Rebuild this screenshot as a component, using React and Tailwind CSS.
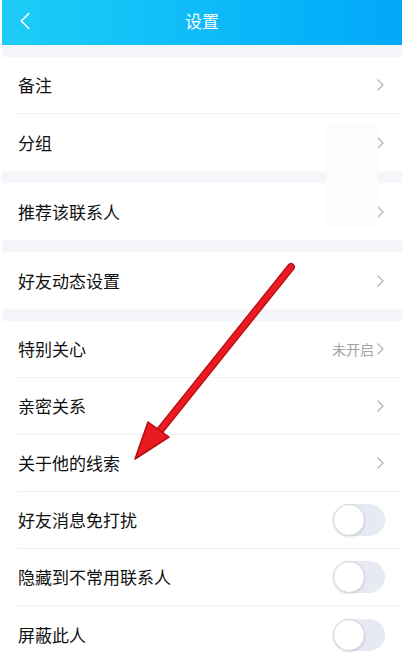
import { ChevronLeft } from "lucide-react";

const FONT = { fontFamily: '"Noto Sans CJK SC", "Noto Sans", sans-serif' };

const groups = [
  [
    { label: "备注", kind: "link" },
    { label: "分组", kind: "link" },
  ],
  [{ label: "推荐该联系人", kind: "link" }],
  [{ label: "好友动态设置", kind: "link" }],
  [
    { label: "特别关心", kind: "link", value: "未开启" },
    { label: "亲密关系", kind: "link" },
    { label: "关于他的线索", kind: "link" },
    { label: "好友消息免打扰", kind: "toggle" },
    { label: "隐藏到不常用联系人", kind: "toggle" },
    { label: "屏蔽此人", kind: "toggle" },
  ],
];

function Chevron() {
  return (
    <svg width="9" height="14" viewBox="0 0 9 14" className="shrink-0">
      <path d="M1.5 1.5 L7 7 L1.5 12.5" fill="none" stroke="#b4b4b4" strokeWidth="1.3" />
    </svg>
  );
}

function Toggle() {
  return (
    <div className="w-[52px] h-[32px] rounded-full bg-[#e8eaf3] flex items-center">
      <div className="w-[32px] h-[32px] rounded-full bg-white border border-[#d4d6de] shadow-sm" />
    </div>
  );
}

function Row({ item, last }) {
  return (
    <div className="h-[57px] pl-[16px] flex">
      <div
        className={`flex-1 flex items-center justify-between pr-[17px] ${
          last ? "" : "border-b border-[#eeeff2]"
        }`}
      >
        <span className="text-[17px] text-[#111]">{item.label}</span>
        {item.kind === "toggle" ? (
          <Toggle />
        ) : (
          <div className="flex items-center gap-[2px]">
            {item.value && (
              <span className="text-[14px] text-[#a3a3a3]">{item.value}</span>
            )}
            <Chevron />
          </div>
        )}
      </div>
    </div>
  );
}

export default function App() {
  return (
    <div className="w-[411px] h-[660px] bg-white overflow-hidden" style={FONT}>
      <div className="relative ml-[2px] w-[400px] bg-[#f5f6fa]">
        {/* Header */}
        <div className="h-[45px] bg-gradient-to-r from-[#1ecdf6] to-[#02a8fa] flex items-center relative">
          <ChevronLeft
            className="absolute left-[8px] top-[6px] text-white"
            size={30}
            strokeWidth={1.3}
          />
          <div className="flex-1 text-center text-white text-[17px] pb-[3px]">设置</div>
        </div>

        <div className="flex flex-col gap-[12px] pt-[12px]">
          {groups.map((group, gi) => (
            <div key={gi} className="bg-white">
              {group.map((item, i) => (
                <Row key={item.label} item={item} last={i === group.length - 1} />
              ))}
            </div>
          ))}
        </div>

        {/* blurred patch from the screenshot */}
        <div className="absolute left-[324px] top-[122px] w-[52px] h-[104px] bg-[#fcfcfd]" />

        {/* red annotation arrow */}
        <svg
          className="absolute left-0 top-0 pointer-events-none"
          width="400"
          height="660"
          viewBox="0 0 400 660"
        >
          <line
            x1="289"
            y1="267"
            x2="152"
            y2="438"
            stroke="#b50d12"
            strokeWidth="8"
            strokeLinecap="round"
          />
          <line
            x1="289"
            y1="267"
            x2="152"
            y2="438"
            stroke="#ea1b20"
            strokeWidth="5.5"
            strokeLinecap="round"
          />
          <polygon
            points="133,459 146,422 167,437"
            fill="#ea1b20"
            stroke="#b50d12"
            strokeWidth="1.5"
            strokeLinejoin="round"
          />
        </svg>
      </div>
    </div>
  );
}
